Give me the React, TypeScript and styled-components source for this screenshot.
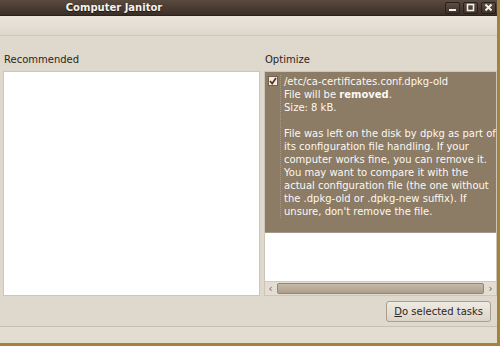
import React from "react";
import styled, { createGlobalStyle } from "styled-components";

const GlobalStyle = createGlobalStyle`
    html, body {
        margin: 0;
        padding: 0;
        background: #a58238;
    }
    body {
        font-family: "DejaVu Sans", "Liberation Sans", sans-serif;
        font-size: 9px;
        color: #2b2620;
    }
`;

// wrapped the way the tree view wraps it
const descriptionLines = [
    "File was left on the disk by dpkg as part of",
    "its configuration file handling. If your",
    "computer works fine, you can remove it.",
    "You may want to compare it with the",
    "actual configuration file (the one without",
    "the .dpkg-old or .dpkg-new suffix). If",
    "unsure, don't remove the file.",
];

export default function App() {
    return (
        <Window>
            <GlobalStyle />
            <TitleBar>
                <Title>Computer Janitor</Title>
                <Controls>
                    <ControlButton aria-label="minimize">
                        <svg width="9" height="9" viewBox="0 0 9 9">
                            <rect x="1" y="6" width="7" height="2" fill="#f4f0ea" />
                        </svg>
                    </ControlButton>
                    <ControlButton aria-label="maximize">
                        <svg width="9" height="9" viewBox="0 0 9 9">
                            <rect x="1.5" y="1.5" width="6" height="6" fill="none" stroke="#f4f0ea" strokeWidth="1.6" />
                        </svg>
                    </ControlButton>
                    <ControlButton aria-label="close">
                        <svg width="9" height="9" viewBox="0 0 9 9">
                            <path d="M1.5 1.5 L7.5 7.5 M7.5 1.5 L1.5 7.5" stroke="#f4f0ea" strokeWidth="2" />
                        </svg>
                    </ControlButton>
                </Controls>
            </TitleBar>
            <MenuStrip />
            <Content>
                <Columns>
                    <Column width={257}>
                        <Label>Recommended</Label>
                        <Pane />
                    </Column>
                    <Column>
                        <Label>Optimize</Label>
                        <Pane>
                            <TaskRow selected>
                                <CheckBox>
                                    <svg width="8" height="8" viewBox="0 0 8 8">
                                        <path d="M1 4 L3.2 6.5 L7 1" fill="none" stroke="#5a2e1c" strokeWidth="1.7" />
                                    </svg>
                                </CheckBox>
                                <TaskText>
                                    <div>/etc/ca-certificates.conf.dpkg-old</div>
                                    <div>File will be <b>removed</b>.</div>
                                    <div>Size: 8 kB.</div>
                                    <Paragraph>
                                        {descriptionLines.map((line) => (
                                            <div key={line}>{line}</div>
                                        ))}
                                    </Paragraph>
                                </TaskText>
                            </TaskRow>
                            <Filler />
                            <Scrollbar>
                                <ScrollArrow>‹</ScrollArrow>
                                <ScrollThumb />
                                <ScrollArrow>›</ScrollArrow>
                            </Scrollbar>
                        </Pane>
                    </Column>
                </Columns>
                <ButtonRow>
                    <ActionButton>
                        <u>D</u>o selected tasks
                    </ActionButton>
                </ButtonRow>
            </Content>
            <StatusBar />
        </Window>
    );
}

const Window = styled.div`
    width: 497px;
    height: 343px;
    display: flex;
    flex-direction: column;
    background: #dfd8cc;
    overflow: hidden;
`;

const TitleBar = styled.div`
    height: 16px;
    flex: none;
    display: flex;
    align-items: center;
    background: linear-gradient(#5a4a3f, #3a2f28);
    border-bottom: 1px solid #2a221d;
    box-sizing: border-box;
`;

const Title = styled.div`
    width: 228px;
    text-align: center;
    color: #f6f2ec;
    font-weight: bold;
    font-size: 10px;
    text-shadow: 0 1px 1px #1d1712;
`;

const Controls = styled.div`
    margin-left: auto;
    display: flex;
    gap: 3px;
    padding-right: 1px;
`;

const ControlButton = styled.div`
    width: 15px;
    height: 12px;
    display: flex;
    align-items: center;
    justify-content: center;
    border-radius: 2px;
    background: linear-gradient(#5d4d42, #3d322b);
    border: 1px solid #28201b;
    box-sizing: border-box;
`;

const MenuStrip = styled.div`
    height: 20px;
    flex: none;
    background: linear-gradient(#ebe5dd, #e0d7cc);
    border-bottom: 1px solid #cfc5b8;
    box-sizing: border-box;
`;

const Content = styled.div`
    flex: 1;
    display: flex;
    flex-direction: column;
    padding: 17px 0 0 3px;
`;

const Columns = styled.div`
    display: flex;
    gap: 4px;
    height: 243px;
`;

const Column = styled.div<{ width?: number }>`
    flex: ${(p) => (p.width ? `0 0 ${p.width}px` : "1")};
    min-width: 0;
    display: flex;
    flex-direction: column;
`;

const Label = styled.div`
    height: 18px;
    font-size: 10px;
    line-height: 14px;
    padding-left: 1px;
`;

const Pane = styled.div`
    flex: 1;
    display: flex;
    flex-direction: column;
    background: #ffffff;
    border: 1px solid #cdc5b9;
    box-sizing: border-box;
    overflow: hidden;
`;

const TaskRow = styled.div<{ selected?: boolean }>`
    display: flex;
    gap: 2px;
    padding: 3px 0 14px 3px;
    background: ${(p) => (p.selected ? "#8c7b65" : "transparent")};
    color: ${(p) => (p.selected ? "#fbf8f3" : "#2b2620")};
    border-bottom: 1px solid #a6998a;
`;

const CheckBox = styled.div`
    width: 10px;
    height: 10px;
    flex: none;
    margin-top: 1px;
    background: #f2ece4;
    border: 1px solid #6e5f4e;
    box-sizing: border-box;
    display: flex;
    align-items: center;
    justify-content: center;
`;

const TaskText = styled.div`
    font-size: 10px;
    line-height: 13px;
    white-space: nowrap;
    padding-left: 3px;
    border-left: 1px dotted #a89a86;
`;

const Paragraph = styled.div`
    margin-top: 13px;
`;

const Filler = styled.div`
    flex: 1;
`;

const Scrollbar = styled.div`
    height: 13px;
    display: flex;
    align-items: center;
    gap: 2px;
    padding: 0 1px;
    background: #e4ddd2;
    border-top: 1px solid #d3cabe;
`;

const ScrollArrow = styled.div`
    width: 9px;
    font-size: 10px;
    line-height: 10px;
    text-align: center;
    color: #6a5f52;
`;

const ScrollThumb = styled.div`
    flex: 1;
    height: 9px;
    border-radius: 2px;
    background: linear-gradient(#c6b9a8, #ad9f8d);
    border: 1px solid #938572;
`;

const ButtonRow = styled.div`
    display: flex;
    justify-content: flex-end;
    padding: 5px 6px 0 0;
`;

const ActionButton = styled.button`
    height: 21px;
    padding: 0 7px;
    font-family: "DejaVu Sans", "Liberation Sans", sans-serif;
    font-size: 10px;
    color: #2b2620;
    background: linear-gradient(#efeae2, #ddd4c7);
    border: 1px solid #a99d8e;
    border-radius: 3px;
`;

const StatusBar = styled.div`
    height: 16px;
    flex: none;
    border-top: 1px solid #c9bfb2;
    background: #e3dcd1;
`;
